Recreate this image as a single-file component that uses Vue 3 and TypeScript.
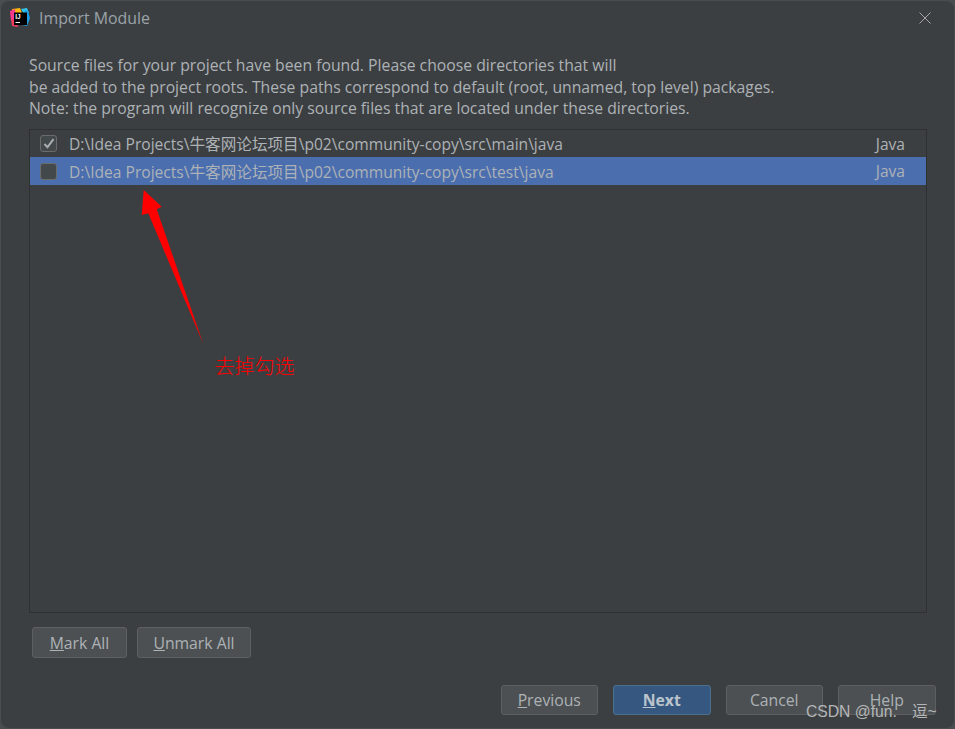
<script setup lang="ts">
interface Row { path: string; type: string; checked: boolean; selected: boolean }
const rows: Row[] = [
  { path: 'D:\\Idea Projects\\牛客网论坛项目\\p02\\community-copy\\src\\main\\java', type: 'Java', checked: true, selected: false },
  { path: 'D:\\Idea Projects\\牛客网论坛项目\\p02\\community-copy\\src\\test\\java', type: 'Java', checked: false, selected: true },
]
</script>

<template>
  <div class="page">
    <div class="dialog">
      <header class="title">
        <svg class="logo" width="20" height="19" viewBox="0 0 20 19">
          <path d="M2 1 L10 0 L12 5 L3 7 Z" fill="#fdb60d" />
          <path d="M0 3 L5 1 L6 12 L1 13 Z" fill="#f9398b" />
          <path d="M1 11 L7 12 L8 19 L2 18 Z" fill="#ee3d5f" />
          <path d="M11 1 L17 0 L19 5 L14 6 Z" fill="#2fc7f0" />
          <path d="M15 2 L18 3 L20 10 L17 18 L12 17 Z" fill="#1c9ee8" />
          <rect x="4" y="4.5" width="13" height="12.5" fill="#000" />
          <text x="5.2" y="11.2" class="logo-text">IJ</text>
          <rect x="5.5" y="14" width="4.5" height="1" fill="#fff" />
        </svg>
        <span class="title-text">Import Module</span>
        <svg class="close" width="12" height="12" viewBox="0 0 12 12">
          <path d="M0.5 0.5 L11.5 11.5 M11.5 0.5 L0.5 11.5" stroke="#a6a6a6" stroke-width="1" fill="none" />
        </svg>
      </header>

      <p class="intro">
        Source files for your project have been found. Please choose directories that will<br />
        be added to the project roots. These paths correspond to default (root, unnamed, top level) packages.<br />
        Note: the program will recognize only source files that are located under these directories.
      </p>

      <div class="list">
        <div v-for="row in rows" :key="row.path" class="row" :class="{ selected: row.selected }">
          <span class="check">
            <svg v-if="row.checked" width="12" height="11" viewBox="0 0 12 11">
              <path d="M1.5 6 L4.5 9.2 L10.5 1.2" stroke="#a9adb0" stroke-width="2" fill="none" />
            </svg>
          </span>
          <span class="path">{{ row.path }}</span>
          <span class="type">{{ row.type }}</span>
        </div>
      </div>

      <div class="mark-buttons">
        <button class="btn mark"><u>M</u>ark All</button>
        <button class="btn unmark"><u>U</u>nmark All</button>
      </div>

      <footer class="footer">
        <button class="btn wide"><u>P</u>revious</button>
        <button class="btn wide primary"><u>N</u>ext</button>
        <button class="btn wide">Cancel</button>
        <button class="btn wide">Help</button>
      </footer>
    </div>

    <svg class="arrow" width="70" height="170" viewBox="0 0 70 170">
      <path d="M3.7 0 L21.7 16.7 L16.7 19.3 L63.3 154 L8.3 23.3 L1.7 25 Z" fill="#ff0000" />
    </svg>
    <span class="note">去掉勾选</span>
    <span class="watermark">CSDN @fun.<span class="watermark-gap">逗~</span></span>
  </div>
</template>

<style>
html, body { margin: 0; background: #4a4d4f; }
</style>

<style scoped>
.page {
  position: relative;
  width: 955px;
  height: 729px;
  overflow: hidden;
  font-family: "Open Sans", "Noto Sans CJK SC", sans-serif;
  font-size: 15.75px;
  color: #adb2b6;
}
.dialog {
  box-sizing: border-box;
  width: 955px;
  height: 729px;
  padding: 0 27px 0 28px;
  background: #3c3f41;
  border: 1px solid #4a4d4f;
  border-radius: 9px;
  display: flex;
  flex-direction: column;
}
.title {
  height: 33px;
  margin-left: -19px;
  margin-right: -4px;
  display: flex;
  align-items: center;
  gap: 9px;
}
.logo-text { font: 700 6.5px "Liberation Sans", sans-serif; fill: #fff; }
.title-text { color: #9aa3aa; font-size: 15.9px; flex: 1; }
.intro {
  margin: 21px 0 0;
  line-height: 21.7px;
  white-space: nowrap;
}
.list {
  margin-top: 9px;
  height: 484px;
  box-sizing: border-box;
  border: 1px solid #2f3030;
  flex: none;
}
.row {
  height: 28px;
  display: flex;
  align-items: center;
  padding: 0 21px 0 10px;
  font-size: 15.6px;
}
.row:first-child { height: 27px; }
.row.selected { background: #4b6eaf; }
.check {
  box-sizing: border-box;
  width: 17px;
  height: 17px;
  margin-right: 12px;
  border: 1px solid #6b6b6b;
  border-radius: 3px;
  background: #43494a;
  display: flex;
  align-items: center;
  justify-content: center;
}
.path { flex: 1; }
.mark-buttons {
  margin-top: 14px;
  margin-left: 3px;
  display: flex;
  gap: 10px;
}
.btn {
  box-sizing: border-box;
  height: 31px;
  padding: 0;
  border: 1px solid #5e6060;
  border-radius: 3px;
  background: #4c5052;
  color: #adb2b6;
  font: inherit;
}
.mark { width: 95px; }
.unmark { width: 114px; }
.footer {
  margin-top: 27px;
  margin-right: -8.5px;
  display: flex;
  justify-content: flex-end;
  gap: 15px;
}
.wide { width: 97.5px; height: 30px; }
.primary {
  background: #365880;
  border-color: #4c708c;
  color: #bbc4cc;
  font-weight: 700;
}
.arrow { position: absolute; left: 140px; top: 190px; }
.note {
  position: absolute;
  left: 214.5px;
  top: 354px;
  color: #ff0000;
  font-size: 20px;
  line-height: 24px;
  font-family: "Noto Sans CJK SC", sans-serif;
  font-weight: 300;
}
.watermark {
  position: absolute;
  left: 806px;
  top: 699px;
  color: #b4b6b8;
  font-size: 15.7px;
  font-family: "Liberation Sans", "Noto Sans CJK SC", sans-serif;
  white-space: nowrap;
}
.watermark-gap { margin-left: 15px; }
</style>
